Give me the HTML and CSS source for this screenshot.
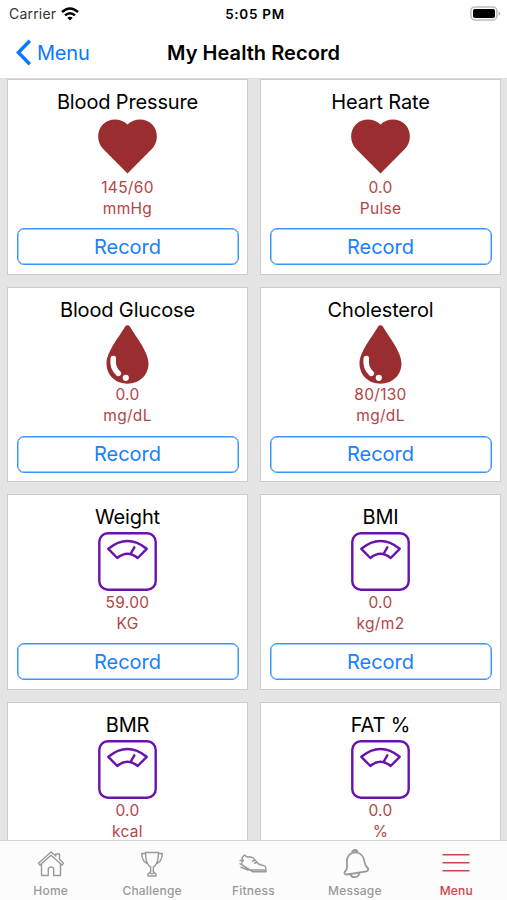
FILE: index.html
```html
<!DOCTYPE html>
<html lang="en">
<head>
    <meta charset="UTF-8">
    <meta name="viewport" content="width=device-width, initial-scale=1.0">
    <title>My Health Record</title>
    <link rel="stylesheet" href="styles.css">
</head>
<body>
    <!-- Shared icons -->
    <svg class="sprite" width="0" height="0">
        <symbol id="heart" viewBox="0 0 59 59">
            <path d="M29.5 56.5L5.2 32C-1.6 25-1.4 14 4.8 7.6C11.5 .9 22.5 1 29.5 7.6C36.5 1 47.5 .9 54.2 7.6C60.4 14 60.6 25 53.8 32Z" fill="#992d2f"/>
        </symbol>
        <symbol id="drop" viewBox="0 0 59 59">
            <path d="M29.5 .3c1 0 1.9.5 2.5 1.5C38 12 50.5 27 50.5 38.5 50.5 50.5 41 58.700 29.500 58.700S8.500 50.500 8.500 38.500C8.500 27 21 12 27 1.800 27.600.8 28.500.3 29.500.3z" fill="#992d2f"/>
            <path d="M15.300 33.500c-.9 6.500 1.200 11.500 5 14.800" fill="none" stroke="#fff" stroke-width="5.600" stroke-linecap="round"/>
            <circle cx="27.800" cy="52.800" r="3.100" fill="#fff"/>
        </symbol>
        <symbol id="scale" viewBox="0 0 59 59">
            <g fill="none" stroke="#6a12ad" stroke-width="2.400" stroke-linejoin="round" stroke-linecap="round">
                <rect x="1.300" y="1.300" width="56.400" height="56.400" rx="8.500"/>
                <path d="M10.300 16.800Q29.500 1.200 48.700 16.800L39.700 26Q29.500 17.500 19.300 26zM36.300 15.300L32.800 21.500"/>
            </g>
        </symbol>
    </svg>

    <div class="phone">
        <header class="header">
            <div class="status-bar">
                <div class="carrier">
                    <span>Carrier</span>
                    <svg width="18" height="14" viewBox="0 0 18 14">
                        <g fill="none" stroke="#000" stroke-width="2.500">
                            <path d="M1 5Q9-2 17 5"/>
                            <path d="M4 8.400Q9 4 14 8.400"/>
                        </g>
                        <path d="M9 13.600L6.300 10.800Q9 8.600 11.700 10.800z"/>
                    </svg>
                </div>
                <div class="time">5:05 PM</div>
                <div class="battery">
                    <svg width="31" height="15" viewBox="0 0 31 15">
                        <rect x=".9" y=".9" width="26" height="13" rx="4" fill="#fff" stroke="#bcbcbc" stroke-width="1.500"/>
                        <rect x="3" y="3" width="22" height="9" rx="1.800"/>
                        <path d="M28.600 5.200q3.200 2.300 0 4.600z" fill="#aaa"/>
                    </svg>
                </div>
            </div>
            <div class="nav-bar">
                <a class="back" href="#">
                    <svg width="16" height="27" viewBox="0 0 16 27">
                        <path d="M13.800 1.800L2.400 13.500L13.800 25.200" fill="none" stroke="#087aff" stroke-width="3.400"/>
                    </svg>
                    <span>Menu</span>
                </a>
                <h1>My Health Record</h1>
            </div>
        </header>

        <main class="records">
            <div class="card">
                <h2>Blood Pressure</h2>
                <svg class="icon"><use href="#heart"/></svg>
                <p>145/60</p>
                <p>mmHg</p>
                <button>Record</button>
            </div>
            <div class="card">
                <h2>Heart Rate</h2>
                <svg class="icon"><use href="#heart"/></svg>
                <p>0.0</p>
                <p>Pulse</p>
                <button>Record</button>
            </div>
            <div class="card">
                <h2>Blood Glucose</h2>
                <svg class="icon"><use href="#drop"/></svg>
                <p>0.0</p>
                <p>mg/dL</p>
                <button>Record</button>
            </div>
            <div class="card">
                <h2>Cholesterol</h2>
                <svg class="icon"><use href="#drop"/></svg>
                <p>80/130</p>
                <p>mg/dL</p>
                <button>Record</button>
            </div>
            <div class="card">
                <h2>Weight</h2>
                <svg class="icon"><use href="#scale"/></svg>
                <p>59.00</p>
                <p>KG</p>
                <button>Record</button>
            </div>
            <div class="card">
                <h2>BMI</h2>
                <svg class="icon"><use href="#scale"/></svg>
                <p>0.0</p>
                <p>kg/m2</p>
                <button>Record</button>
            </div>
            <div class="card">
                <h2>BMR</h2>
                <svg class="icon"><use href="#scale"/></svg>
                <p>0.0</p>
                <p>kcal</p>
            </div>
            <div class="card">
                <h2>FAT %</h2>
                <svg class="icon"><use href="#scale"/></svg>
                <p>0.0</p>
                <p>%</p>
            </div>
        </main>

        <nav class="tab-bar">
            <a href="#">
                <svg viewBox="0 0 30 30">
                    <path d="M2.500 14.200L15 3L19.800 7V5H23.500V10.300L27.500 14.200L26 16L15 6.200L4 16zM5.500 15V26.500H12.300V19.500Q15 16.500 17.700 19.500V26.500H24.500V15"/>
                </svg>
                <span>Home</span>
            </a>
            <a href="#">
                <svg viewBox="0 0 30 30">
                    <path d="M8.500 3.500H21.500C21.500 11 20 16 16.300 18.200V22.500L19 25V27H11V25L13.700 22.500V18.200C10 16 8.500 11 8.500 3.500zM8.500 4.500H4.700C4.800 10 7 13.500 11 15M21.500 4.500H25.300C25.200 10 23 13.500 19 15M13 24.500H17"/>
                </svg>
                <span>Challenge</span>
            </a>
            <a href="#">
                <svg viewBox="0 0 30 30">
                    <path d="M4 8.500L6.500 6Q8.500 8.500 11.500 7.800L15 8.600L20.500 15L27 17.200Q28.300 19 28 22.700H14.500L3.500 15.300Q5 11.500 4 8.500zM1.500 14.500L14 22M2.500 18L10 21H28M1.500 11.500H6M14 12.500L17 11M16 14.500L19 13"/>
                </svg>
                <span>Fitness</span>
            </a>
            <a href="#">
                <svg class="bell" viewBox="0 0 30 30">
                    <path d="M12 4A2.700 2.700 0 0 1 17.500 3.500C22 5 24 9 24.500 13C25 16.500 26.500 18 28 19.500Q28.500 21.700 26.500 22.300L7 25.500Q4.300 25.600 4.500 23.500C6.500 21.500 7.500 19 7 15.500C6.300 10 7.500 6 12 4zM12 4Q14.500 2.800 17.500 3.500M10.500 25.200C11.500 29.500 19 29 19.300 23.700"/>
                </svg>
                <span>Message</span>
            </a>
            <a class="active" href="#">
                <svg viewBox="0 0 30 30">
                    <path d="M1.500 5.800H28.500M1.500 13.800H28.500M1.500 21.800H28.500"/>
                </svg>
                <span>Menu</span>
            </a>
        </nav>
    </div>
</body>
</html>
```
FILE: styles.css
```css
/* General Styling */
* {
    box-sizing: border-box;
}

body {
    font-family: Inter, "Liberation Sans", sans-serif;
    margin: 0;
    background-color: #e4e4e4;
    color: #000;
}

h1, h2, p {
    margin: 0;
    font-weight: 400;
}

a {
    text-decoration: none;
}

.sprite {
    display: none;
}

.phone {
    display: flex;
    flex-direction: column;
    height: 900px;
    overflow: hidden;
}

/* Header Styling */
.header {
    flex: none;
    height: 79px;
    border-bottom: 1px solid #dcdcdc;
    background-color: #fff;
}

.status-bar {
    display: grid;
    grid-template-columns: 1fr auto 1fr;
    align-items: center;
    height: 27px;
    padding: 0 6px 0 9px;
    font-size: 14px;
}

.carrier {
    display: flex;
    align-items: center;
    gap: 5px;
    color: #333;
    letter-spacing: 0.2px;
}

.time {
    font-size: 13.5px;
    font-weight: 600;
    letter-spacing: 0.7px;
}

.battery {
    display: flex;
    justify-content: flex-end;
}

.nav-bar {
    display: grid;
    grid-template-columns: 1fr auto 1fr;
    align-items: center;
    height: 51px;
    padding: 0 16px;
}

.back {
    display: flex;
    align-items: center;
    gap: 5px;
    font-size: 20px;
    letter-spacing: -0.2px;
    color: #087aff;
}

.nav-bar h1 {
    font-size: 20px;
    font-weight: 600;
    letter-spacing: 0.05px;
}

/* Record Cards */
.records {
    flex: 1;
    min-height: 0;
    display: grid;
    grid-template-columns: 241px 241px;
    grid-auto-rows: 195.7px;
    gap: 12px;
    padding: 0 7px;
    overflow: hidden;
}

.card {
    display: flex;
    flex-direction: column;
    align-items: center;
    padding: 7px 8px 0;
    border: 1px solid #cbcbcb;
    background-color: #fff;
}

.card h2 {
    font-size: 20px;
    line-height: 30px;
    letter-spacing: -0.15px;
}

.icon {
    flex: none;
    width: 59px;
    height: 59px;
    margin-bottom: 0.5px;
}

.card p {
    font-size: 15.5px;
    line-height: 21px;
    letter-spacing: 0.3px;
    color: #b34545;
}

.card button {
    width: 222px;
    height: 37px;
    margin-top: 9.5px;
    padding: 0;
    border: 1px solid #3d94fa;
    border-radius: 7px;
    box-shadow: inset 0 0 0 0.5px #3d94fa;
    background-color: #fff;
    color: #1a80f5;
    font-family: inherit;
    font-size: 20px;
}

/* Tab Bar */
.tab-bar {
    flex: none;
    display: grid;
    grid-template-columns: repeat(5, 1fr);
    height: 60px;
    border-top: 1px solid #d5d5d5;
    background-color: #fcfcfc;
}

.tab-bar a {
    display: flex;
    flex-direction: column;
    align-items: center;
    padding-top: 8px;
    color: #999;
    font-size: 12px;
    font-weight: 500;
    letter-spacing: 0.2px;
}

.tab-bar svg {
    width: 30px;
    height: 30px;
    margin-bottom: 4px;
    fill: none;
    stroke: currentColor;
    stroke-width: 1.4;
    stroke-linejoin: round;
}

.tab-bar .bell {
    stroke-width: 1.8;
}

.tab-bar .active {
    color: #cc4448;
}
```
